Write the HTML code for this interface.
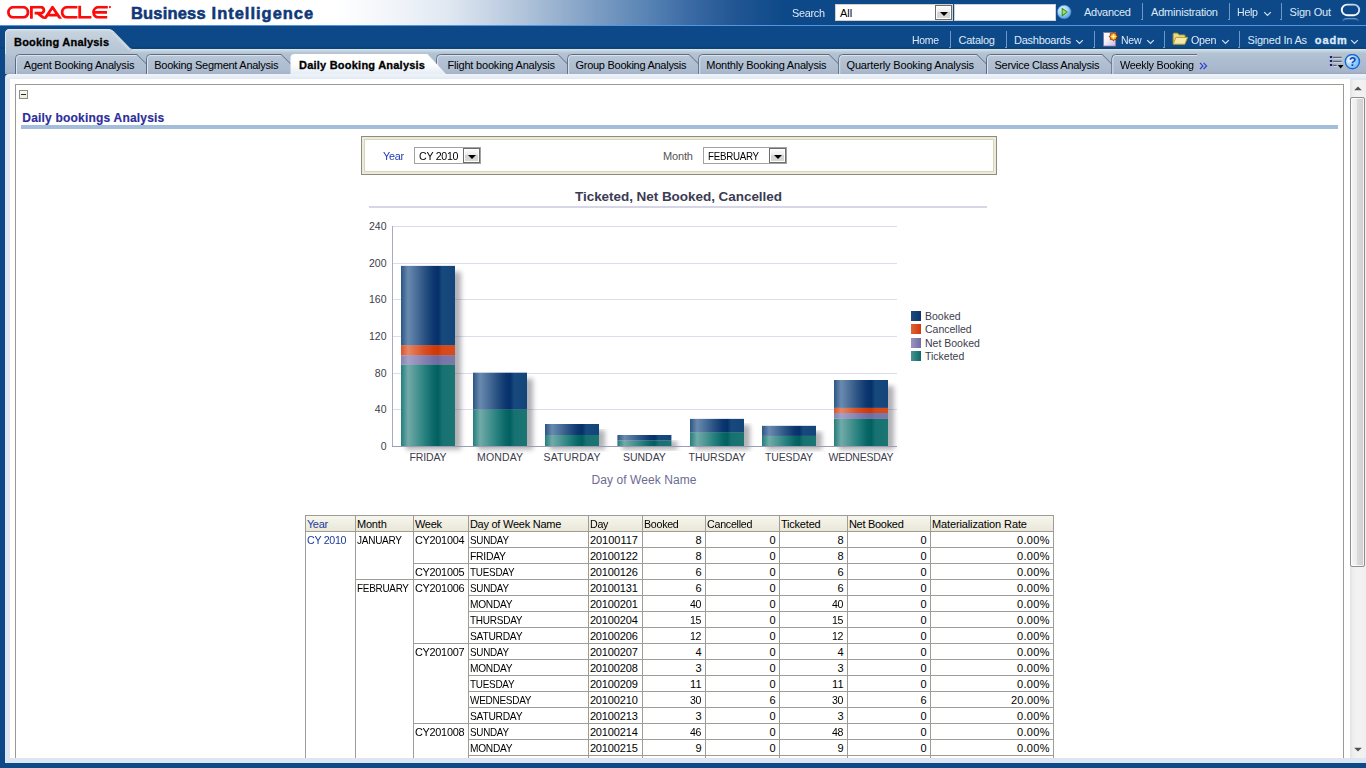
<!DOCTYPE html>
<html>
<head>
<meta charset="utf-8">
<title>Oracle BI - Booking Analysis</title>
<style>
*{box-sizing:border-box;margin:0;padding:0}
html,body{width:1366px;height:768px;overflow:hidden;background:#0d4988;font-family:"Liberation Sans",sans-serif;font-size:11px;color:#000}
#page{position:absolute;left:0;top:0;width:1366px;height:768px;overflow:hidden;background:#0d4988}
.t{position:absolute;white-space:pre}
.a{position:absolute}
#mast{position:absolute;left:0;top:0;width:1366px;height:25px;background:linear-gradient(90deg,#ffffff 0,#ffffff 335px,#f0f4f9 400px,#dfe7f1 450px,#b5c7dc 517px,#7f9fc4 592px,#5682b3 650px,#3f6da6 684px,#215693 735px,#0d4988 785px,#0d4988 100%)}
#mastline{position:absolute;left:0;top:25px;width:1366px;height:1px;background:#5395e5}
#darkbot{position:absolute;left:0;top:47px;width:1366px;height:2px;background:#0a4579}
.sep{position:absolute;width:1px;height:17px;background:#6c98c8}
.sep:after{content:"";position:absolute;left:-1px;bottom:0;width:1px;height:1px;background:#6c98c8}
#tabbar{position:absolute;left:5px;top:49px;width:1361px;height:25px;background:linear-gradient(180deg,#dde4ea 0,#ccd7e0 1.5px,#b8c8d7 3.5px,#b1c2d3 5px,#adbdd0 12px,#a8b6cc 22px,#a3b1c6 23.5px,#98a5ba 25px)}
#strip{position:absolute;left:5px;top:74px;width:1361px;height:689px;background:linear-gradient(180deg,#f1f5fa 0,#eaf0f7 2px,#e0e8f2 5px,#dde7f2 6px,#dde7f2 100%);border-top-left-radius:4px}
#white{position:absolute;left:10px;top:79px;width:1340px;height:679px;background:#fff}
#box{position:absolute;left:15px;top:84px;width:1329px;height:700px;border:1px solid #9a9a92;background:#fff}
.sel{position:absolute;height:17px;background:#fff;border:1px solid #a2a2a2}
.selb{position:absolute;right:0;top:0;width:17px;height:15px;border:1px solid #6c6c6c;background:linear-gradient(180deg,#fdfdfd 0,#ececec 45%,#d4d4d4 50%,#d9d9d9 100%);box-shadow:inset 0 0 0 1px #fff}
.selb:after{content:"";position:absolute;left:4px;top:6px;border:4px solid transparent;border-top:4px solid #000;border-bottom:0}
</style>
</head>
<body>
<div id="page">
<div id="mast"></div><div id="mastline"></div><div id="darkbot"></div><svg class="a" style="left:6px;top:5px" width="108" height="16" viewBox="0 0 108 16">
<defs><clipPath id="lc"><rect x="0" y="0.8" width="108" height="13"/></clipPath></defs>
<g fill="none" stroke="#fc0b0b" stroke-width="2.8" clip-path="url(#lc)">
<rect x="2.4" y="2.2" width="19.6" height="10.2" rx="5.1" ry="5.1"/>
<path d="M25.4 14 V2.2 H34.9 a3 3 0 0 1 0 6 H28.6 M31.6 8.2 L39.6 14.4"/>
<path d="M38.4 14.4 L46.5 2.3 L54.8 14.4 M42.4 10.2 H52"/>
<path d="M71.4 2.2 H61.2 a5.1 5.1 0 0 0 0 10.2 H71.4"/>
<path d="M73.7 0 V12.4 H85.4"/>
<path d="M101.8 2.2 H92.6 a5.1 5.1 0 0 0 0 10.2 H101.2 M88.5 7.3 H101"/>
</g>
<circle cx="103.9" cy="2.1" r="1.1" fill="#fc0b0b"/>
</svg><div class="t" style="left:131.00px;top:5.03px;font-size:16.5px;line-height:16.5px;color:#0f3878;font-weight:bold;-webkit-text-stroke:0.55px #0f3878;letter-spacing:0.175px;">Business</div><div class="t" style="left:211.60px;top:5.03px;font-size:16.5px;line-height:16.5px;color:#0f3878;font-weight:bold;-webkit-text-stroke:0.55px #0f3878;letter-spacing:0.984px;">Intelligence</div><div class="t" style="left:792.00px;top:7.69px;font-size:11px;line-height:11px;color:#dde9f9;letter-spacing:-0.300px;transform:scaleX(0.9892);transform-origin:0 0;">Search</div><div class="sel" style="left:835px;top:4px;width:118px;border-color:#d8d0c0"><div class="selb"></div></div><div class="t" style="left:840.00px;top:7.69px;font-size:11px;line-height:11px;color:#000;">All</div><div class="a" style="left:954px;top:4px;width:102px;height:17px;background:#fff;border:1px solid #c9d3de"></div><svg class="a" style="left:1056.2px;top:3.8px" width="18" height="18" viewBox="0 0 18 18">
<defs><radialGradient id="gg" cx="38%" cy="30%" r="78%"><stop offset="0" stop-color="#e2f3ff"/><stop offset=".5" stop-color="#9fd2f7"/><stop offset="1" stop-color="#3d8ad6"/></radialGradient></defs>
<circle cx="8.9" cy="8.9" r="7" fill="#0a3468" opacity=".55"/>
<circle cx="8.2" cy="8.1" r="7" fill="url(#gg)" stroke="#2a6fc0" stroke-width=".7"/>
<path d="M6.2 4.4 L11.2 8.1 L6.2 11.8 Z" fill="#a5dc6a" stroke="#3c9a1e" stroke-width="1.1" stroke-linejoin="round"/></svg><div class="t" style="left:1084.00px;top:6.69px;font-size:11px;line-height:11px;color:#dde9f9;letter-spacing:-0.277px;">Advanced</div><div class="sep" style="left:1142px;top:3px"></div><div class="t" style="left:1151.00px;top:6.69px;font-size:11px;line-height:11px;color:#dde9f9;letter-spacing:-0.208px;">Administration</div><div class="sep" style="left:1229px;top:3px"></div><div class="t" style="left:1237.00px;top:6.69px;font-size:11px;line-height:11px;color:#dde9f9;letter-spacing:-0.300px;transform:scaleX(0.9666);transform-origin:0 0;">Help</div><svg class="a" style="left:1262.5px;top:11px" width="9" height="6" viewBox="0 0 9 6"><path d="M1.2 1.2 L4.5 4.5 L7.8 1.2" fill="none" stroke="#d3e3f5" stroke-width="1.2"/></svg><div class="sep" style="left:1281px;top:3px"></div><div class="t" style="left:1289.50px;top:6.69px;font-size:11px;line-height:11px;color:#dde9f9;letter-spacing:-0.188px;">Sign Out</div><svg class="a" style="left:1339px;top:2px" width="24" height="22" viewBox="0 0 24 22">
<defs><linearGradient id="og" x1="0" y1="1" x2="1" y2="0"><stop offset="0" stop-color="#ffffff"/><stop offset=".55" stop-color="#f0f6fd"/><stop offset="1" stop-color="#9fc0ea"/></linearGradient>
<linearGradient id="rg" x1="0" y1="0" x2="0" y2="1"><stop offset="0" stop-color="#8fb0d8" stop-opacity=".85"/><stop offset="1" stop-color="#8fb0d8" stop-opacity="0"/></linearGradient></defs>
<rect x="2.8" y="2.6" width="17.4" height="10.6" rx="5.3" fill="none" stroke="url(#og)" stroke-width="1.9"/>
<path d="M2.6 19.8 Q3.6 16 8 15.9 H15.2 Q19.4 16 20.6 19.8 L19 19.8 Q17.8 17.7 15 17.6 H8.2 Q5.4 17.7 4.2 19.8 Z" fill="url(#rg)"/></svg><div class="t" style="left:912.00px;top:34.69px;font-size:11px;line-height:11px;color:#dde9f9;letter-spacing:-0.300px;transform:scaleX(0.9492);transform-origin:0 0;">Home</div><div class="sep" style="left:950px;top:31px"></div><div class="t" style="left:958.50px;top:34.69px;font-size:11px;line-height:11px;color:#dde9f9;letter-spacing:-0.237px;">Catalog</div><div class="sep" style="left:1006px;top:31px"></div><div class="t" style="left:1014.00px;top:34.69px;font-size:11px;line-height:11px;color:#dde9f9;letter-spacing:-0.259px;">Dashboards</div><svg class="a" style="left:1075px;top:39px" width="9" height="6" viewBox="0 0 9 6"><path d="M1.2 1.2 L4.5 4.5 L7.8 1.2" fill="none" stroke="#d3e3f5" stroke-width="1.2"/></svg><div class="sep" style="left:1094px;top:31px"></div><svg class="a" style="left:1102px;top:31px" width="18" height="17" viewBox="0 0 18 17">
<defs><linearGradient id="ng" x1="0" y1="0" x2="1" y2="1"><stop offset="0" stop-color="#ffffff"/><stop offset=".45" stop-color="#f1eef8"/><stop offset="1" stop-color="#c4bbe0"/></linearGradient></defs>
<rect x="2.3" y="2.3" width="12" height="13.4" fill="#54497f" opacity=".55"/>
<rect x="1.6" y="1.6" width="12" height="13.4" fill="url(#ng)" stroke="#8379a8" stroke-width=".7"/>
<polygon points="11.50,0.90 12.76,2.45 14.75,2.25 14.55,4.24 16.10,5.50 14.55,6.76 14.75,8.75 12.76,8.55 11.50,10.10 10.24,8.55 8.25,8.75 8.45,6.76 6.90,5.50 8.45,4.24 8.25,2.25 10.24,2.45" fill="#b83000" stroke="#a02800" stroke-width=".5"/>
<circle cx="11.5" cy="5.5" r="2.9" fill="#f0a51c"/>
<polygon points="11.50,1.90 12.42,4.58 15.10,5.50 12.42,6.42 11.50,9.10 10.58,6.42 7.90,5.50 10.58,4.58" fill="#ffee55"/>
<circle cx="11.5" cy="5.5" r="1.1" fill="#fffbd0"/></svg><div class="t" style="left:1120.60px;top:34.69px;font-size:11px;line-height:11px;color:#dde9f9;letter-spacing:-0.300px;transform:scaleX(0.9572);transform-origin:0 0;">New</div><svg class="a" style="left:1145.5px;top:39px" width="9" height="6" viewBox="0 0 9 6"><path d="M1.2 1.2 L4.5 4.5 L7.8 1.2" fill="none" stroke="#d3e3f5" stroke-width="1.2"/></svg><div class="sep" style="left:1164px;top:31px"></div><svg class="a" style="left:1172px;top:32px" width="17" height="14" viewBox="0 0 17 14">
<path d="M1.2 12 V2.2 Q1.2 1.2 2.2 1.2 H5.6 L7.2 3 H12.2 Q13 3 13 3.8 V5" fill="#e9dc8c" stroke="#b9a030" stroke-width="1"/>
<path d="M1.2 12.2 L3.8 5.4 H15.6 L12.8 12.2 Z" fill="#f3eaa4" stroke="#b9a030" stroke-width="1" stroke-linejoin="round"/></svg><div class="t" style="left:1190.60px;top:34.69px;font-size:11px;line-height:11px;color:#dde9f9;letter-spacing:-0.300px;transform:scaleX(0.9799);transform-origin:0 0;">Open</div><svg class="a" style="left:1220.5px;top:39px" width="9" height="6" viewBox="0 0 9 6"><path d="M1.2 1.2 L4.5 4.5 L7.8 1.2" fill="none" stroke="#d3e3f5" stroke-width="1.2"/></svg><div class="sep" style="left:1239px;top:31px"></div><div class="t" style="left:1247.60px;top:34.69px;font-size:11px;line-height:11px;color:#dde9f9;letter-spacing:-0.207px;">Signed In As</div><div class="t" style="left:1314.80px;top:34.69px;font-size:11px;line-height:11px;color:#dde9f9;font-weight:bold;-webkit-text-stroke:0.3px #dde9f9;letter-spacing:0.885px;">oadm</div><svg class="a" style="left:1350px;top:39px" width="9" height="6" viewBox="0 0 9 6"><path d="M1.2 1.2 L4.5 4.5 L7.8 1.2" fill="none" stroke="#d3e3f5" stroke-width="1.2"/></svg><div id="tabbar"></div><svg class="a" style="left:5px;top:28px" width="140" height="28" viewBox="0 0 140 28">
<defs><linearGradient id="dg" x1="0" y1="0" x2="0" y2="1"><stop offset="0" stop-color="#d3dde6"/><stop offset=".12" stop-color="#c6d3dd"/><stop offset=".6" stop-color="#bccad8"/><stop offset="1" stop-color="#b3c3d4"/></linearGradient></defs>
<path d="M0 28 V6 Q0 1 5 1 H103 Q106.5 1 109 3.6 L125 20 Q126.2 21 128 21 L122 26 V28 Z" fill="url(#dg)"/>
<path d="M0.5 26 V6 Q0.5 1.5 5 1.5 H103 Q106.4 1.5 108.8 4" fill="none" stroke="#dfe7ee" stroke-width="1"/>
<path d="M108 5 L124.6 21.8" fill="none" stroke="#ccd8e2" stroke-width="2.2"/>
</svg><div class="t" style="left:14.00px;top:36.69px;font-size:11px;line-height:11px;color:#000;font-weight:bold;-webkit-text-stroke:0.3px #000;letter-spacing:0.207px;">Booking Analysis</div><svg class="a" style="left:0;top:49px" width="1366" height="31" viewBox="0 0 1366 31"><defs><linearGradient id="tg" x1="0" y1="0" x2="0" y2="1"><stop offset="0" stop-color="#bccad9"/><stop offset=".25" stop-color="#b3c3d4"/><stop offset=".8" stop-color="#acbbcf"/><stop offset="1" stop-color="#a4b2c8"/></linearGradient><linearGradient id="ag" x1="0" y1="0" x2="0" y2="1"><stop offset="0" stop-color="#ffffff"/><stop offset=".4" stop-color="#fcfdfe"/><stop offset=".8" stop-color="#e4ecf5"/><stop offset="1" stop-color="#e0e8f2"/></linearGradient></defs><path d="M15.5 25 V9.5 Q15.5 5.5 19.5 5.5 H136.9 L146.3 14.8 V25 Z" fill="url(#tg)"/><path d="M15.5 25 V9.5 Q15.5 5.5 19.5 5.5 H136.9 L146.60000000000002 15.2" fill="none" stroke="#5d6a80" stroke-width="1"/><path d="M16.5 25 V9.5 Q16.5 6.5 19.5 6.5 H136.3" fill="none" stroke="#dbe3ec" stroke-width="1"/><path d="M146.5 25 V9.5 Q146.5 5.5 150.5 5.5 H281.2 L290.59999999999997 14.8 V25 Z" fill="url(#tg)"/><path d="M146.5 25 V9.5 Q146.5 5.5 150.5 5.5 H281.2 L290.9 15.2" fill="none" stroke="#5d6a80" stroke-width="1"/><path d="M147.5 25 V9.5 Q147.5 6.5 150.5 6.5 H280.59999999999997" fill="none" stroke="#dbe3ec" stroke-width="1"/><path d="M436.6 25 V9.5 Q436.6 5.5 440.6 5.5 H558.0 L567.4 14.8 V25 Z" fill="url(#tg)"/><path d="M436.6 25 V9.5 Q436.6 5.5 440.6 5.5 H558.0 L567.6999999999999 15.2" fill="none" stroke="#5d6a80" stroke-width="1"/><path d="M437.6 25 V9.5 Q437.6 6.5 440.6 6.5 H557.4" fill="none" stroke="#dbe3ec" stroke-width="1"/><path d="M567.6 25 V9.5 Q567.6 5.5 571.6 5.5 H689.1 L698.5 14.8 V25 Z" fill="url(#tg)"/><path d="M567.6 25 V9.5 Q567.6 5.5 571.6 5.5 H689.1 L698.8 15.2" fill="none" stroke="#5d6a80" stroke-width="1"/><path d="M568.6 25 V9.5 Q568.6 6.5 571.6 6.5 H688.5" fill="none" stroke="#dbe3ec" stroke-width="1"/><path d="M698.7 25 V9.5 Q698.7 5.5 702.7 5.5 H829.1 L838.5 14.8 V25 Z" fill="url(#tg)"/><path d="M698.7 25 V9.5 Q698.7 5.5 702.7 5.5 H829.1 L838.8 15.2" fill="none" stroke="#5d6a80" stroke-width="1"/><path d="M699.7 25 V9.5 Q699.7 6.5 702.7 6.5 H828.5" fill="none" stroke="#dbe3ec" stroke-width="1"/><path d="M838.7 25 V9.5 Q838.7 5.5 842.7 5.5 H976.9 L986.3 14.8 V25 Z" fill="url(#tg)"/><path d="M838.7 25 V9.5 Q838.7 5.5 842.7 5.5 H976.9 L986.5999999999999 15.2" fill="none" stroke="#5d6a80" stroke-width="1"/><path d="M839.7 25 V9.5 Q839.7 6.5 842.7 6.5 H976.3" fill="none" stroke="#dbe3ec" stroke-width="1"/><path d="M986.5 25 V9.5 Q986.5 5.5 990.5 5.5 H1102.2 L1111.6000000000001 14.8 V25 Z" fill="url(#tg)"/><path d="M986.5 25 V9.5 Q986.5 5.5 990.5 5.5 H1102.2 L1111.9 15.2" fill="none" stroke="#5d6a80" stroke-width="1"/><path d="M987.5 25 V9.5 Q987.5 6.5 990.5 6.5 H1101.6000000000001" fill="none" stroke="#dbe3ec" stroke-width="1"/><path d="M1111.8 25 V9.5 Q1111.8 5.5 1115.8 5.5 H1197" fill="none" stroke="#5d6a80" stroke-width="1"/><path d="M1112.8 25 V9.5 Q1112.8 6.5 1115.8 6.5 H1197" fill="none" stroke="#dbe3ec" stroke-width="1"/><path d="M290.5 31 V9 Q290.5 5 294.5 5 H427.4 L446.0 25 V31 Z" fill="url(#ag)"/></svg><div class="t" style="left:23.80px;top:59.69px;font-size:11px;line-height:11px;color:#000;letter-spacing:-0.208px;">Agent Booking Analysis</div><div class="t" style="left:154.30px;top:59.69px;font-size:11px;line-height:11px;color:#000;letter-spacing:-0.267px;">Booking Segment Analysis</div><div class="t" style="left:299.00px;top:59.69px;font-size:11px;line-height:11px;color:#000;font-weight:bold;-webkit-text-stroke:0.3px #000;letter-spacing:0.226px;">Daily Booking Analysis</div><div class="t" style="left:447.50px;top:59.69px;font-size:11px;line-height:11px;color:#000;letter-spacing:-0.196px;">Flight booking Analysis</div><div class="t" style="left:575.50px;top:59.69px;font-size:11px;line-height:11px;color:#000;letter-spacing:-0.276px;">Group Booking Analysis</div><div class="t" style="left:706.20px;top:59.69px;font-size:11px;line-height:11px;color:#000;letter-spacing:-0.193px;">Monthly Booking Analysis</div><div class="t" style="left:846.50px;top:59.69px;font-size:11px;line-height:11px;color:#000;letter-spacing:-0.154px;">Quarterly Booking Analysis</div><div class="t" style="left:994.50px;top:59.69px;font-size:11px;line-height:11px;color:#000;letter-spacing:-0.274px;">Service Class Analysis</div><div class="t" style="left:1119.70px;top:59.69px;font-size:11px;line-height:11px;color:#000;letter-spacing:-0.300px;transform:scaleX(0.9897);transform-origin:0 0;">Weekly Booking</div><svg class="a" style="left:1199px;top:62px" width="10" height="8" viewBox="0 0 10 8"><path d="M1 .8 L4 3.9 L1 7 M4.6 .8 L7.6 3.9 L4.6 7" fill="none" stroke="#2a3fc6" stroke-width="1.15"/></svg><svg class="a" style="left:1328px;top:54px" width="36" height="17" viewBox="0 0 36 17">
<defs><radialGradient id="hg" cx="30%" cy="35%" r="85%"><stop offset="0" stop-color="#f4fbff"/><stop offset=".35" stop-color="#b5defb"/><stop offset=".75" stop-color="#7cc2f6"/><stop offset="1" stop-color="#4a9ce6"/></radialGradient></defs>
<g stroke="#f2f5f9" stroke-width="1" opacity=".55"><path d="M5.8 4.2 H14.2 M5.8 8.2 H14.2 M5.8 12.2 H9.2"/></g>
<g stroke="#60606a" stroke-width="1.1"><path d="M5.1 3.4 H13.6 M5.1 7.4 H13.6 M5.1 11.4 H8.6"/></g>
<g fill="#1a1670"><rect x="1.9" y="1.9" width="2.3" height="2.1" rx=".6"/><rect x="1.9" y="5.9" width="2.3" height="2.1" rx=".6"/><rect x="1.9" y="9.9" width="2.3" height="2.1" rx=".6"/></g>
<path d="M9.8 10.9 H15.5 L12.65 14.6 Z" fill="#000"/>
<circle cx="24.4" cy="7.6" r="7.1" fill="url(#hg)" stroke="#1b68cf" stroke-width="1.4"/>
<text x="24.5" y="12" text-anchor="middle" font-family="Liberation Sans" font-weight="bold" font-size="12.5" fill="#1243bf">?</text>
</svg><div id="strip"></div><div id="white"></div><div id="box"></div><div class="a" style="left:19px;top:90px;width:9px;height:9px;border:1px solid #8c8c84;background:linear-gradient(180deg,#fbfbf6,#ecece0)"><div class="a" style="left:1px;top:3px;width:5px;height:1px;background:#2a2a2a"></div></div><div class="t" style="left:22.30px;top:111.84px;font-size:12px;line-height:12px;color:#2d2d9a;font-weight:bold;-webkit-text-stroke:0.15px #2d2d9a;letter-spacing:0.200px;">Daily bookings Analysis</div><div class="a" style="left:21px;top:125px;width:1317px;height:4px;background:#a3bdda"></div><div class="a" style="left:361px;top:136px;width:636px;height:39px;border:1px solid #8c8c84;background:#ecebd8"><div class="a" style="left:2px;top:2px;right:2px;bottom:2px;border:1px solid #d6d5bf;background:#fff"></div></div><div class="t" style="left:382.80px;top:150.69px;font-size:11px;line-height:11px;color:#2238b4;letter-spacing:-0.300px;transform:scaleX(0.9843);transform-origin:0 0;">Year</div><div class="sel" style="left:414px;top:147px;width:67px"><div class="selb"></div></div><div class="t" style="left:418.50px;top:150.69px;font-size:11px;line-height:11px;color:#000;letter-spacing:-0.300px;transform:scaleX(0.9679);transform-origin:0 0;">CY 2010</div><div class="t" style="left:663.00px;top:150.69px;font-size:11px;line-height:11px;color:#555555;letter-spacing:-0.145px;">Month</div><div class="sel" style="left:703px;top:147px;width:84px"><div class="selb"></div></div><div class="t" style="left:707.50px;top:150.69px;font-size:11px;line-height:11px;color:#000;letter-spacing:-0.300px;transform:scaleX(0.8854);transform-origin:0 0;">FEBRUARY</div><div class="t" style="left:575.00px;top:189.57px;font-size:13.5px;line-height:13.5px;color:#3b3b54;font-weight:bold;letter-spacing:-0.044px;">Ticketed, Net Booked, Cancelled</div><div class="a" style="left:369px;top:206px;width:618px;height:2px;background:#d6d6e6"></div><svg class="a" style="left:360px;top:215px" width="640" height="280" viewBox="360 215 640 280"><defs>
<linearGradient id="gB" x1="0" y1="0" x2="1" y2="0"><stop offset="0" stop-color="#2b5584"/><stop offset=".13" stop-color="#6a8aaf"/><stop offset=".2" stop-color="#5c7ea6"/><stop offset=".42" stop-color="#2e5685"/><stop offset=".6" stop-color="#0c3770"/><stop offset=".69" stop-color="#05306a"/><stop offset=".76" stop-color="#17497d"/><stop offset="1" stop-color="#14457a"/></linearGradient>
<linearGradient id="gT" x1="0" y1="0" x2="1" y2="0"><stop offset="0" stop-color="#237d7b"/><stop offset=".13" stop-color="#70aba9"/><stop offset=".2" stop-color="#62a19f"/><stop offset=".42" stop-color="#2c8482"/><stop offset=".6" stop-color="#0a6867"/><stop offset=".69" stop-color="#016160"/><stop offset=".76" stop-color="#167170"/><stop offset="1" stop-color="#1a7573"/></linearGradient>
<linearGradient id="gC" x1="0" y1="0" x2="1" y2="0"><stop offset="0" stop-color="#d9532a"/><stop offset=".13" stop-color="#e58664"/><stop offset=".2" stop-color="#e27a55"/><stop offset=".42" stop-color="#d95025"/><stop offset=".6" stop-color="#d13c0c"/><stop offset=".69" stop-color="#cf3704"/><stop offset=".76" stop-color="#d5481a"/><stop offset="1" stop-color="#d64c1e"/></linearGradient>
<linearGradient id="gN" x1="0" y1="0" x2="1" y2="0"><stop offset="0" stop-color="#8580b0"/><stop offset=".13" stop-color="#a5a0c8"/><stop offset=".2" stop-color="#9f9ac3"/><stop offset=".42" stop-color="#8782b2"/><stop offset=".6" stop-color="#7570a4"/><stop offset=".69" stop-color="#6f6aa0"/><stop offset=".76" stop-color="#7a75a8"/><stop offset="1" stop-color="#7d78aa"/></linearGradient>
<filter id="sh" x="-20%" y="-5%" width="150%" height="115%"><feGaussianBlur stdDeviation="2.8"/></filter>
</defs><path d="M392 446.5 H897" stroke="#9c9cb4" stroke-width="1"/><path d="M392 409.5 H897" stroke="#dcdcea" stroke-width="1"/><path d="M392 373.5 H897" stroke="#dcdcea" stroke-width="1"/><path d="M392 336.5 H897" stroke="#dcdcea" stroke-width="1"/><path d="M392 299.5 H897" stroke="#dcdcea" stroke-width="1"/><path d="M392 263.5 H897" stroke="#dcdcea" stroke-width="1"/><path d="M392 226.5 H897" stroke="#dcdcea" stroke-width="1"/><path d="M392.5 226 V446.5" stroke="#a9a9c4" stroke-width="1"/><rect x="406" y="271.9" width="55" height="177.6" fill="#3c3c48" opacity=".4" filter="url(#sh)"/><rect x="478" y="378.7" width="55" height="70.8" fill="#3c3c48" opacity=".4" filter="url(#sh)"/><rect x="550" y="430.0" width="55" height="19.5" fill="#3c3c48" opacity=".4" filter="url(#sh)"/><rect x="622.4" y="441.0" width="55" height="8.5" fill="#3c3c48" opacity=".4" filter="url(#sh)"/><rect x="695" y="424.9" width="55" height="24.6" fill="#3c3c48" opacity=".4" filter="url(#sh)"/><rect x="767" y="431.8" width="55" height="17.7" fill="#3c3c48" opacity=".4" filter="url(#sh)"/><rect x="839" y="386.0" width="55" height="63.5" fill="#3c3c48" opacity=".4" filter="url(#sh)"/><path d="M392 446.5 H897" stroke="#9c9cb4" stroke-width="1"/><rect x="401" y="364.42" width="54" height="81.58" fill="url(#gT)"/><rect x="401" y="355.25" width="54" height="9.17" fill="url(#gN)"/><rect x="401" y="345.17" width="54" height="10.08" fill="url(#gC)"/><rect x="401" y="265.88" width="54" height="79.29" fill="url(#gB)"/><rect x="473" y="409.33" width="54" height="36.67" fill="url(#gT)"/><rect x="473" y="372.67" width="54" height="36.67" fill="url(#gB)"/><rect x="545" y="435.00" width="54" height="11.00" fill="url(#gT)"/><rect x="545" y="424.00" width="54" height="11.00" fill="url(#gB)"/><rect x="617.4" y="440.50" width="54" height="5.50" fill="url(#gT)"/><rect x="617.4" y="435.00" width="54" height="5.50" fill="url(#gB)"/><rect x="690" y="432.25" width="54" height="13.75" fill="url(#gT)"/><rect x="690" y="418.87" width="54" height="13.38" fill="url(#gB)"/><rect x="762" y="435.92" width="54" height="10.08" fill="url(#gT)"/><rect x="762" y="425.83" width="54" height="10.08" fill="url(#gB)"/><rect x="834" y="418.50" width="54" height="27.50" fill="url(#gT)"/><rect x="834" y="413.00" width="54" height="5.50" fill="url(#gN)"/><rect x="834" y="407.87" width="54" height="5.13" fill="url(#gC)"/><rect x="834" y="380.00" width="54" height="27.87" fill="url(#gB)"/></svg><div class="t" style="left:380.66px;top:441.11px;font-size:10.5px;line-height:10.5px;color:#3c3c4c;">0</div><div class="t" style="left:374.81px;top:404.11px;font-size:10.5px;line-height:10.5px;color:#3c3c4c;">40</div><div class="t" style="left:374.81px;top:368.11px;font-size:10.5px;line-height:10.5px;color:#3c3c4c;">80</div><div class="t" style="left:368.97px;top:331.11px;font-size:10.5px;line-height:10.5px;color:#3c3c4c;">120</div><div class="t" style="left:368.97px;top:294.11px;font-size:10.5px;line-height:10.5px;color:#3c3c4c;">160</div><div class="t" style="left:368.97px;top:258.11px;font-size:10.5px;line-height:10.5px;color:#3c3c4c;">200</div><div class="t" style="left:368.97px;top:221.11px;font-size:10.5px;line-height:10.5px;color:#3c3c4c;">240</div><div class="t" style="left:409.50px;top:452.11px;font-size:10.5px;line-height:10.5px;color:#3c3c4c;letter-spacing:-0.147px;">FRIDAY</div><div class="t" style="left:477.00px;top:452.11px;font-size:10.5px;line-height:10.5px;color:#3c3c4c;letter-spacing:0.138px;">MONDAY</div><div class="t" style="left:543.50px;top:452.11px;font-size:10.5px;line-height:10.5px;color:#3c3c4c;letter-spacing:0.196px;">SATURDAY</div><div class="t" style="left:622.90px;top:452.11px;font-size:10.5px;line-height:10.5px;color:#3c3c4c;">SUNDAY</div><div class="t" style="left:688.50px;top:452.11px;font-size:10.5px;line-height:10.5px;color:#3c3c4c;">THURSDAY</div><div class="t" style="left:765.00px;top:452.11px;font-size:10.5px;line-height:10.5px;color:#3c3c4c;letter-spacing:-0.138px;">TUESDAY</div><div class="t" style="left:828.50px;top:452.11px;font-size:10.5px;line-height:10.5px;color:#3c3c4c;letter-spacing:-0.238px;">WEDNESDAY</div><div class="t" style="left:591.50px;top:473.84px;font-size:12px;line-height:12px;color:#6c6c92;letter-spacing:0.078px;">Day of Week Name</div><div class="a" style="left:911px;top:311.0px;width:10px;height:10px;background:linear-gradient(90deg,#1f4a7c,#0b356b)"></div><div class="t" style="left:925.00px;top:311.11px;font-size:10.5px;line-height:10.5px;color:#3c3c4c;">Booked</div><div class="a" style="left:911px;top:324.0px;width:10px;height:10px;background:linear-gradient(90deg,#e0643a,#cf3a08)"></div><div class="t" style="left:925.00px;top:324.11px;font-size:10.5px;line-height:10.5px;color:#3c3c4c;">Cancelled</div><div class="a" style="left:911px;top:338.0px;width:10px;height:10px;background:linear-gradient(90deg,#9a95c0,#726da2)"></div><div class="t" style="left:925.00px;top:338.11px;font-size:10.5px;line-height:10.5px;color:#3c3c4c;">Net Booked</div><div class="a" style="left:911px;top:351.0px;width:10px;height:10px;background:linear-gradient(90deg,#4a9491,#0c6968)"></div><div class="t" style="left:925.00px;top:351.11px;font-size:10.5px;line-height:10.5px;color:#3c3c4c;">Ticketed</div><div class="a" style="left:305px;top:515px;width:749px;height:17px;background:linear-gradient(180deg,#f8f7f0 0,#f1efe3 50%,#e8e6d6 100%)"></div><div class="a" style="left:305px;top:515px;width:1px;height:272px;background:#9d9d95"></div><div class="a" style="left:355px;top:515px;width:1px;height:272px;background:#9d9d95"></div><div class="a" style="left:413px;top:515px;width:1px;height:272px;background:#9d9d95"></div><div class="a" style="left:468px;top:515px;width:1px;height:272px;background:#9d9d95"></div><div class="a" style="left:588px;top:515px;width:1px;height:272px;background:#9d9d95"></div><div class="a" style="left:642px;top:515px;width:1px;height:272px;background:#9d9d95"></div><div class="a" style="left:705px;top:515px;width:1px;height:272px;background:#9d9d95"></div><div class="a" style="left:779px;top:515px;width:1px;height:272px;background:#9d9d95"></div><div class="a" style="left:847px;top:515px;width:1px;height:272px;background:#9d9d95"></div><div class="a" style="left:930px;top:515px;width:1px;height:272px;background:#9d9d95"></div><div class="a" style="left:1053px;top:515px;width:1px;height:272px;background:#9d9d95"></div><div class="a" style="left:305px;top:515px;width:749px;height:1px;background:#9d9d95"></div><div class="a" style="left:305px;top:531px;width:749px;height:1px;background:#9d9d95"></div><div class="a" style="left:468px;top:547px;width:586px;height:1px;background:#9d9d95"></div><div class="a" style="left:413px;top:563px;width:641px;height:1px;background:#9d9d95"></div><div class="a" style="left:355px;top:579px;width:699px;height:1px;background:#9d9d95"></div><div class="a" style="left:468px;top:595px;width:586px;height:1px;background:#9d9d95"></div><div class="a" style="left:468px;top:611px;width:586px;height:1px;background:#9d9d95"></div><div class="a" style="left:468px;top:627px;width:586px;height:1px;background:#9d9d95"></div><div class="a" style="left:413px;top:643px;width:641px;height:1px;background:#9d9d95"></div><div class="a" style="left:468px;top:659px;width:586px;height:1px;background:#9d9d95"></div><div class="a" style="left:468px;top:675px;width:586px;height:1px;background:#9d9d95"></div><div class="a" style="left:468px;top:691px;width:586px;height:1px;background:#9d9d95"></div><div class="a" style="left:468px;top:707px;width:586px;height:1px;background:#9d9d95"></div><div class="a" style="left:413px;top:723px;width:641px;height:1px;background:#9d9d95"></div><div class="a" style="left:468px;top:739px;width:586px;height:1px;background:#9d9d95"></div><div class="a" style="left:468px;top:755px;width:586px;height:1px;background:#9d9d95"></div><div class="a" style="left:468px;top:771px;width:586px;height:1px;background:#9d9d95"></div><div class="a" style="left:305px;top:787px;width:749px;height:1px;background:#9d9d95"></div><div class="t" style="left:306.90px;top:518.69px;font-size:11px;line-height:11px;color:#1c3aa0;letter-spacing:-0.345px;">Year</div><div class="t" style="left:356.90px;top:518.69px;font-size:11px;line-height:11px;color:#000;letter-spacing:-0.170px;">Month</div><div class="t" style="left:414.90px;top:518.69px;font-size:11px;line-height:11px;color:#000;letter-spacing:-0.241px;">Week</div><div class="t" style="left:469.90px;top:518.69px;font-size:11px;line-height:11px;color:#000;letter-spacing:-0.251px;">Day of Week Name</div><div class="t" style="left:589.90px;top:518.69px;font-size:11px;line-height:11px;color:#000;letter-spacing:-0.300px;transform:scaleX(0.9703);transform-origin:0 0;">Day</div><div class="t" style="left:643.90px;top:518.69px;font-size:11px;line-height:11px;color:#000;letter-spacing:-0.300px;transform:scaleX(0.9717);transform-origin:0 0;">Booked</div><div class="t" style="left:706.90px;top:518.69px;font-size:11px;line-height:11px;color:#000;letter-spacing:-0.300px;transform:scaleX(0.9759);transform-origin:0 0;">Cancelled</div><div class="t" style="left:780.90px;top:518.69px;font-size:11px;line-height:11px;color:#000;letter-spacing:-0.196px;">Ticketed</div><div class="t" style="left:848.90px;top:518.69px;font-size:11px;line-height:11px;color:#000;letter-spacing:-0.287px;">Net Booked</div><div class="t" style="left:931.90px;top:518.69px;font-size:11px;line-height:11px;color:#000;letter-spacing:-0.112px;">Materialization Rate</div><div class="t" style="left:306.90px;top:534.69px;font-size:11px;line-height:11px;color:#1c3aa0;letter-spacing:-0.300px;transform:scaleX(0.9679);transform-origin:0 0;">CY 2010</div><div class="t" style="left:356.90px;top:534.69px;font-size:11px;line-height:11px;color:#000;letter-spacing:-0.300px;transform:scaleX(0.9117);transform-origin:0 0;">JANUARY</div><div class="t" style="left:414.90px;top:534.69px;font-size:11px;line-height:11px;color:#000;letter-spacing:-0.300px;transform:scaleX(0.9920);transform-origin:0 0;">CY201004</div><div class="t" style="left:469.90px;top:534.69px;font-size:11px;line-height:11px;color:#000;letter-spacing:-0.300px;transform:scaleX(0.8959);transform-origin:0 0;">SUNDAY</div><div class="t" style="left:589.90px;top:534.69px;font-size:11px;line-height:11px;color:#000;letter-spacing:-0.018px;">20100117</div><div class="t" style="left:695.38px;top:534.69px;font-size:11px;line-height:11px;color:#000;">8</div><div class="t" style="left:769.38px;top:534.69px;font-size:11px;line-height:11px;color:#000;">0</div><div class="t" style="left:837.38px;top:534.69px;font-size:11px;line-height:11px;color:#000;">8</div><div class="t" style="left:920.38px;top:534.69px;font-size:11px;line-height:11px;color:#000;">0</div><div class="t" style="left:1017.00px;top:534.69px;font-size:11px;line-height:11px;color:#000;letter-spacing:0.324px;">0.00%</div><div class="t" style="left:469.90px;top:550.69px;font-size:11px;line-height:11px;color:#000;letter-spacing:-0.300px;transform:scaleX(0.9466);transform-origin:0 0;">FRIDAY</div><div class="t" style="left:589.90px;top:550.69px;font-size:11px;line-height:11px;color:#000;letter-spacing:-0.136px;">20100122</div><div class="t" style="left:695.38px;top:550.69px;font-size:11px;line-height:11px;color:#000;">8</div><div class="t" style="left:769.38px;top:550.69px;font-size:11px;line-height:11px;color:#000;">0</div><div class="t" style="left:837.38px;top:550.69px;font-size:11px;line-height:11px;color:#000;">8</div><div class="t" style="left:920.38px;top:550.69px;font-size:11px;line-height:11px;color:#000;">0</div><div class="t" style="left:1017.00px;top:550.69px;font-size:11px;line-height:11px;color:#000;letter-spacing:0.324px;">0.00%</div><div class="t" style="left:414.90px;top:566.69px;font-size:11px;line-height:11px;color:#000;letter-spacing:-0.300px;transform:scaleX(0.9920);transform-origin:0 0;">CY201005</div><div class="t" style="left:469.90px;top:566.69px;font-size:11px;line-height:11px;color:#000;letter-spacing:-0.300px;transform:scaleX(0.9019);transform-origin:0 0;">TUESDAY</div><div class="t" style="left:589.90px;top:566.69px;font-size:11px;line-height:11px;color:#000;letter-spacing:-0.136px;">20100126</div><div class="t" style="left:695.38px;top:566.69px;font-size:11px;line-height:11px;color:#000;">6</div><div class="t" style="left:769.38px;top:566.69px;font-size:11px;line-height:11px;color:#000;">0</div><div class="t" style="left:837.38px;top:566.69px;font-size:11px;line-height:11px;color:#000;">6</div><div class="t" style="left:920.38px;top:566.69px;font-size:11px;line-height:11px;color:#000;">0</div><div class="t" style="left:1017.00px;top:566.69px;font-size:11px;line-height:11px;color:#000;letter-spacing:0.324px;">0.00%</div><div class="t" style="left:356.90px;top:582.69px;font-size:11px;line-height:11px;color:#000;letter-spacing:-0.300px;transform:scaleX(0.9027);transform-origin:0 0;">FEBRUARY</div><div class="t" style="left:414.90px;top:582.69px;font-size:11px;line-height:11px;color:#000;letter-spacing:-0.300px;transform:scaleX(0.9920);transform-origin:0 0;">CY201006</div><div class="t" style="left:469.90px;top:582.69px;font-size:11px;line-height:11px;color:#000;letter-spacing:-0.300px;transform:scaleX(0.8959);transform-origin:0 0;">SUNDAY</div><div class="t" style="left:589.90px;top:582.69px;font-size:11px;line-height:11px;color:#000;letter-spacing:-0.136px;">20100131</div><div class="t" style="left:695.38px;top:582.69px;font-size:11px;line-height:11px;color:#000;">6</div><div class="t" style="left:769.38px;top:582.69px;font-size:11px;line-height:11px;color:#000;">0</div><div class="t" style="left:837.38px;top:582.69px;font-size:11px;line-height:11px;color:#000;">6</div><div class="t" style="left:920.38px;top:582.69px;font-size:11px;line-height:11px;color:#000;">0</div><div class="t" style="left:1017.00px;top:582.69px;font-size:11px;line-height:11px;color:#000;letter-spacing:0.324px;">0.00%</div><div class="t" style="left:469.90px;top:598.69px;font-size:11px;line-height:11px;color:#000;letter-spacing:-0.300px;transform:scaleX(0.9245);transform-origin:0 0;">MONDAY</div><div class="t" style="left:589.90px;top:598.69px;font-size:11px;line-height:11px;color:#000;letter-spacing:-0.136px;">20100201</div><div class="t" style="left:690.00px;top:598.69px;font-size:11px;line-height:11px;color:#000;letter-spacing:-0.300px;transform:scaleX(0.9623);transform-origin:0 0;">40</div><div class="t" style="left:769.38px;top:598.69px;font-size:11px;line-height:11px;color:#000;">0</div><div class="t" style="left:832.00px;top:598.69px;font-size:11px;line-height:11px;color:#000;letter-spacing:-0.300px;transform:scaleX(0.9623);transform-origin:0 0;">40</div><div class="t" style="left:920.38px;top:598.69px;font-size:11px;line-height:11px;color:#000;">0</div><div class="t" style="left:1017.00px;top:598.69px;font-size:11px;line-height:11px;color:#000;letter-spacing:0.324px;">0.00%</div><div class="t" style="left:469.90px;top:614.69px;font-size:11px;line-height:11px;color:#000;letter-spacing:-0.300px;transform:scaleX(0.9114);transform-origin:0 0;">THURSDAY</div><div class="t" style="left:589.90px;top:614.69px;font-size:11px;line-height:11px;color:#000;letter-spacing:-0.136px;">20100204</div><div class="t" style="left:690.00px;top:614.69px;font-size:11px;line-height:11px;color:#000;letter-spacing:-0.300px;transform:scaleX(0.9623);transform-origin:0 0;">15</div><div class="t" style="left:769.38px;top:614.69px;font-size:11px;line-height:11px;color:#000;">0</div><div class="t" style="left:832.00px;top:614.69px;font-size:11px;line-height:11px;color:#000;letter-spacing:-0.300px;transform:scaleX(0.9623);transform-origin:0 0;">15</div><div class="t" style="left:920.38px;top:614.69px;font-size:11px;line-height:11px;color:#000;">0</div><div class="t" style="left:1017.00px;top:614.69px;font-size:11px;line-height:11px;color:#000;letter-spacing:0.324px;">0.00%</div><div class="t" style="left:469.90px;top:630.69px;font-size:11px;line-height:11px;color:#000;letter-spacing:-0.300px;transform:scaleX(0.9347);transform-origin:0 0;">SATURDAY</div><div class="t" style="left:589.90px;top:630.69px;font-size:11px;line-height:11px;color:#000;letter-spacing:-0.136px;">20100206</div><div class="t" style="left:690.00px;top:630.69px;font-size:11px;line-height:11px;color:#000;letter-spacing:-0.300px;transform:scaleX(0.9623);transform-origin:0 0;">12</div><div class="t" style="left:769.38px;top:630.69px;font-size:11px;line-height:11px;color:#000;">0</div><div class="t" style="left:832.00px;top:630.69px;font-size:11px;line-height:11px;color:#000;letter-spacing:-0.300px;transform:scaleX(0.9623);transform-origin:0 0;">12</div><div class="t" style="left:920.38px;top:630.69px;font-size:11px;line-height:11px;color:#000;">0</div><div class="t" style="left:1017.00px;top:630.69px;font-size:11px;line-height:11px;color:#000;letter-spacing:0.324px;">0.00%</div><div class="t" style="left:414.90px;top:646.69px;font-size:11px;line-height:11px;color:#000;letter-spacing:-0.300px;transform:scaleX(0.9920);transform-origin:0 0;">CY201007</div><div class="t" style="left:469.90px;top:646.69px;font-size:11px;line-height:11px;color:#000;letter-spacing:-0.300px;transform:scaleX(0.8959);transform-origin:0 0;">SUNDAY</div><div class="t" style="left:589.90px;top:646.69px;font-size:11px;line-height:11px;color:#000;letter-spacing:-0.136px;">20100207</div><div class="t" style="left:695.38px;top:646.69px;font-size:11px;line-height:11px;color:#000;">4</div><div class="t" style="left:769.38px;top:646.69px;font-size:11px;line-height:11px;color:#000;">0</div><div class="t" style="left:837.38px;top:646.69px;font-size:11px;line-height:11px;color:#000;">4</div><div class="t" style="left:920.38px;top:646.69px;font-size:11px;line-height:11px;color:#000;">0</div><div class="t" style="left:1017.00px;top:646.69px;font-size:11px;line-height:11px;color:#000;letter-spacing:0.324px;">0.00%</div><div class="t" style="left:469.90px;top:662.69px;font-size:11px;line-height:11px;color:#000;letter-spacing:-0.300px;transform:scaleX(0.9245);transform-origin:0 0;">MONDAY</div><div class="t" style="left:589.90px;top:662.69px;font-size:11px;line-height:11px;color:#000;letter-spacing:-0.136px;">20100208</div><div class="t" style="left:695.38px;top:662.69px;font-size:11px;line-height:11px;color:#000;">3</div><div class="t" style="left:769.38px;top:662.69px;font-size:11px;line-height:11px;color:#000;">0</div><div class="t" style="left:837.38px;top:662.69px;font-size:11px;line-height:11px;color:#000;">3</div><div class="t" style="left:920.38px;top:662.69px;font-size:11px;line-height:11px;color:#000;">0</div><div class="t" style="left:1017.00px;top:662.69px;font-size:11px;line-height:11px;color:#000;letter-spacing:0.324px;">0.00%</div><div class="t" style="left:469.90px;top:678.69px;font-size:11px;line-height:11px;color:#000;letter-spacing:-0.300px;transform:scaleX(0.9019);transform-origin:0 0;">TUESDAY</div><div class="t" style="left:589.90px;top:678.69px;font-size:11px;line-height:11px;color:#000;letter-spacing:-0.136px;">20100209</div><div class="t" style="left:690.00px;top:678.69px;font-size:11px;line-height:11px;color:#000;letter-spacing:0.078px;">11</div><div class="t" style="left:769.38px;top:678.69px;font-size:11px;line-height:11px;color:#000;">0</div><div class="t" style="left:832.00px;top:678.69px;font-size:11px;line-height:11px;color:#000;letter-spacing:0.078px;">11</div><div class="t" style="left:920.38px;top:678.69px;font-size:11px;line-height:11px;color:#000;">0</div><div class="t" style="left:1017.00px;top:678.69px;font-size:11px;line-height:11px;color:#000;letter-spacing:0.324px;">0.00%</div><div class="t" style="left:469.90px;top:694.69px;font-size:11px;line-height:11px;color:#000;letter-spacing:-0.300px;transform:scaleX(0.9085);transform-origin:0 0;">WEDNESDAY</div><div class="t" style="left:589.90px;top:694.69px;font-size:11px;line-height:11px;color:#000;letter-spacing:-0.136px;">20100210</div><div class="t" style="left:690.00px;top:694.69px;font-size:11px;line-height:11px;color:#000;letter-spacing:-0.300px;transform:scaleX(0.9623);transform-origin:0 0;">30</div><div class="t" style="left:769.38px;top:694.69px;font-size:11px;line-height:11px;color:#000;">6</div><div class="t" style="left:832.00px;top:694.69px;font-size:11px;line-height:11px;color:#000;letter-spacing:-0.300px;transform:scaleX(0.9623);transform-origin:0 0;">30</div><div class="t" style="left:920.38px;top:694.69px;font-size:11px;line-height:11px;color:#000;">6</div><div class="t" style="left:1011.00px;top:694.69px;font-size:11px;line-height:11px;color:#000;letter-spacing:0.237px;">20.00%</div><div class="t" style="left:469.90px;top:710.69px;font-size:11px;line-height:11px;color:#000;letter-spacing:-0.300px;transform:scaleX(0.9347);transform-origin:0 0;">SATURDAY</div><div class="t" style="left:589.90px;top:710.69px;font-size:11px;line-height:11px;color:#000;letter-spacing:-0.136px;">20100213</div><div class="t" style="left:695.38px;top:710.69px;font-size:11px;line-height:11px;color:#000;">3</div><div class="t" style="left:769.38px;top:710.69px;font-size:11px;line-height:11px;color:#000;">0</div><div class="t" style="left:837.38px;top:710.69px;font-size:11px;line-height:11px;color:#000;">3</div><div class="t" style="left:920.38px;top:710.69px;font-size:11px;line-height:11px;color:#000;">0</div><div class="t" style="left:1017.00px;top:710.69px;font-size:11px;line-height:11px;color:#000;letter-spacing:0.324px;">0.00%</div><div class="t" style="left:414.90px;top:726.69px;font-size:11px;line-height:11px;color:#000;letter-spacing:-0.300px;transform:scaleX(0.9920);transform-origin:0 0;">CY201008</div><div class="t" style="left:469.90px;top:726.69px;font-size:11px;line-height:11px;color:#000;letter-spacing:-0.300px;transform:scaleX(0.8959);transform-origin:0 0;">SUNDAY</div><div class="t" style="left:589.90px;top:726.69px;font-size:11px;line-height:11px;color:#000;letter-spacing:-0.136px;">20100214</div><div class="t" style="left:690.00px;top:726.69px;font-size:11px;line-height:11px;color:#000;letter-spacing:-0.300px;transform:scaleX(0.9623);transform-origin:0 0;">46</div><div class="t" style="left:769.38px;top:726.69px;font-size:11px;line-height:11px;color:#000;">0</div><div class="t" style="left:832.00px;top:726.69px;font-size:11px;line-height:11px;color:#000;letter-spacing:-0.300px;transform:scaleX(0.9623);transform-origin:0 0;">48</div><div class="t" style="left:920.38px;top:726.69px;font-size:11px;line-height:11px;color:#000;">0</div><div class="t" style="left:1017.00px;top:726.69px;font-size:11px;line-height:11px;color:#000;letter-spacing:0.324px;">0.00%</div><div class="t" style="left:469.90px;top:742.69px;font-size:11px;line-height:11px;color:#000;letter-spacing:-0.300px;transform:scaleX(0.9245);transform-origin:0 0;">MONDAY</div><div class="t" style="left:589.90px;top:742.69px;font-size:11px;line-height:11px;color:#000;letter-spacing:-0.136px;">20100215</div><div class="t" style="left:695.38px;top:742.69px;font-size:11px;line-height:11px;color:#000;">9</div><div class="t" style="left:769.38px;top:742.69px;font-size:11px;line-height:11px;color:#000;">0</div><div class="t" style="left:837.38px;top:742.69px;font-size:11px;line-height:11px;color:#000;">9</div><div class="t" style="left:920.38px;top:742.69px;font-size:11px;line-height:11px;color:#000;">0</div><div class="t" style="left:1017.00px;top:742.69px;font-size:11px;line-height:11px;color:#000;letter-spacing:0.324px;">0.00%</div><div class="t" style="left:469.90px;top:758.69px;font-size:11px;line-height:11px;color:#000;letter-spacing:-0.300px;transform:scaleX(0.9019);transform-origin:0 0;">TUESDAY</div><div class="t" style="left:589.90px;top:758.69px;font-size:11px;line-height:11px;color:#000;letter-spacing:-0.136px;">20100216</div><div class="t" style="left:690.00px;top:758.69px;font-size:11px;line-height:11px;color:#000;letter-spacing:-0.300px;transform:scaleX(0.9623);transform-origin:0 0;">12</div><div class="t" style="left:769.38px;top:758.69px;font-size:11px;line-height:11px;color:#000;">0</div><div class="t" style="left:832.00px;top:758.69px;font-size:11px;line-height:11px;color:#000;letter-spacing:-0.300px;transform:scaleX(0.9623);transform-origin:0 0;">12</div><div class="t" style="left:920.38px;top:758.69px;font-size:11px;line-height:11px;color:#000;">0</div><div class="t" style="left:1017.00px;top:758.69px;font-size:11px;line-height:11px;color:#000;letter-spacing:0.324px;">0.00%</div><div class="t" style="left:469.90px;top:774.69px;font-size:11px;line-height:11px;color:#000;letter-spacing:-0.300px;transform:scaleX(0.9085);transform-origin:0 0;">WEDNESDAY</div><div class="t" style="left:589.90px;top:774.69px;font-size:11px;line-height:11px;color:#000;letter-spacing:-0.136px;">20100217</div><div class="t" style="left:690.00px;top:774.69px;font-size:11px;line-height:11px;color:#000;letter-spacing:-0.300px;transform:scaleX(0.9623);transform-origin:0 0;">20</div><div class="t" style="left:769.38px;top:774.69px;font-size:11px;line-height:11px;color:#000;">0</div><div class="t" style="left:832.00px;top:774.69px;font-size:11px;line-height:11px;color:#000;letter-spacing:-0.300px;transform:scaleX(0.9623);transform-origin:0 0;">20</div><div class="t" style="left:920.38px;top:774.69px;font-size:11px;line-height:11px;color:#000;">0</div><div class="t" style="left:1017.00px;top:774.69px;font-size:11px;line-height:11px;color:#000;letter-spacing:0.324px;">0.00%</div><div class="a" style="left:5px;top:758px;width:1361px;height:5px;background:#dce6f2"></div><div class="a" style="left:0;top:763px;width:1366px;height:5px;background:#0d4988"></div><div class="a" style="left:1344px;top:80px;width:6px;height:678px;background:#fff"></div><div class="a" style="left:1350px;top:80px;width:16px;height:678px;background:linear-gradient(90deg,#e3e3e3 0,#eeeeee 3px,#f3f3f3 8px,#efefef 100%)">
<svg class="a" style="left:0;top:0" width="16" height="17" viewBox="0 0 16 17"><path d="M4.2 10.2 L8 6.4 L11.8 10.2 Z" fill="#505050"/></svg>
<div class="a" style="left:0px;top:17px;width:15px;height:470px;border:1px solid #8e8e8e;border-radius:2px;background:linear-gradient(90deg,#f6f6f6 0,#ececec 45%,#dadada 50%,#cfcfd3 100%);box-shadow:inset 0 0 0 1px rgba(255,255,255,.75)"></div>
<svg class="a" style="left:0;top:661px" width="16" height="17" viewBox="0 0 16 17"><path d="M4.2 6.8 L8 10.6 L11.8 6.8 Z" fill="#505050"/></svg>
</div></div>
</body>
</html>
